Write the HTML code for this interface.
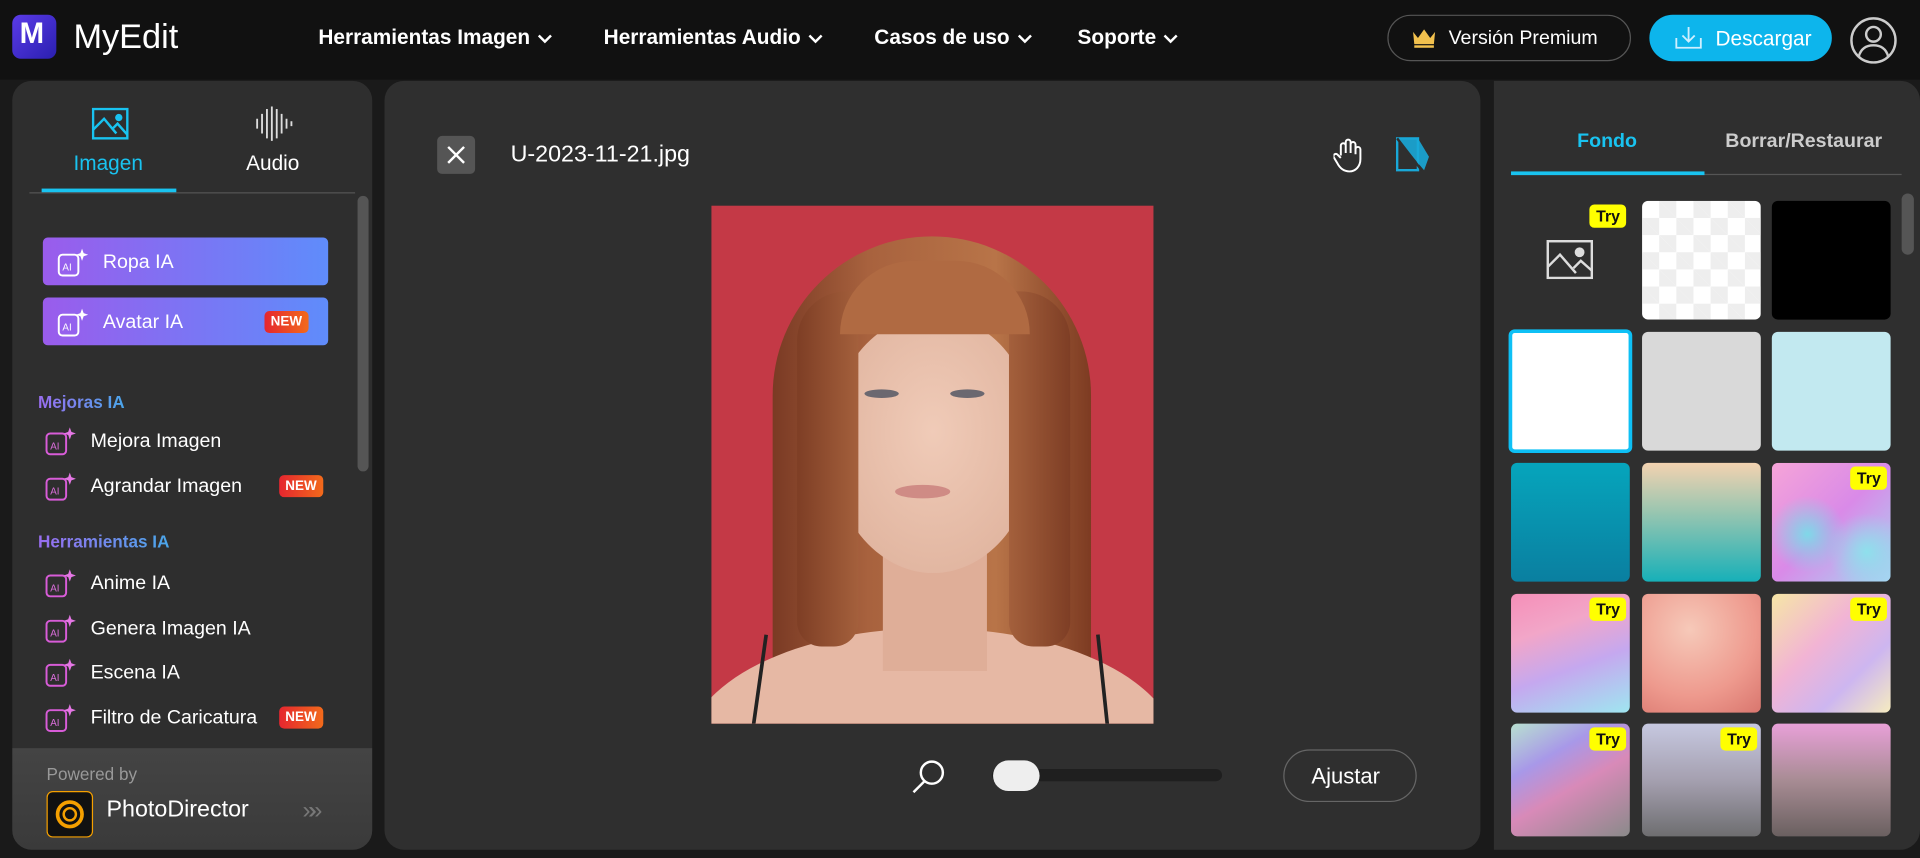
<!DOCTYPE html>
<html><head><meta charset="utf-8">
<style>
*{box-sizing:border-box;margin:0;padding:0}
html,body{width:1920px;height:858px;overflow:hidden;background:#111;font-family:"Liberation Sans",sans-serif;color:#fff}
#s{position:absolute;left:0;top:0;width:1568px;height:701px;transform:scale(1.22449);transform-origin:0 0;background:#1a1a1a}
.a{position:absolute}
.hdr{left:0;top:0;width:1568px;height:65px;background:#111}
.nav{top:21px;font-size:17px;font-weight:bold;white-space:nowrap}
.nav svg{margin-left:6px;vertical-align:middle}
.panel{background:#2e2e2e}
.mi{left:36px;font-size:16px;display:flex;align-items:center;gap:12px;height:24px}
.ai{width:26px;height:26px}
.new{background:linear-gradient(90deg,#e5262f,#f26a1b);color:#fff;font-size:11px;font-weight:bold;border-radius:4px;padding:3px 5px}
.sec{left:31px;font-size:14px;font-weight:bold;background:linear-gradient(90deg,#9a6df0,#4aa6ea);-webkit-background-clip:text;color:transparent}
.c{width:97px;height:97px;border-radius:5px;overflow:hidden}
.try{position:absolute;right:3px;top:3px;background:#ff0;color:#111;font-size:13px;font-weight:bold;padding:2px 5px;border-radius:4px}
</style></head><body>
<div id="s">
<div class="a hdr"></div>
<div class="a" style="left:10px;top:12px;width:36px;height:36px;border-radius:7px;background:linear-gradient(135deg,#5b3be8,#2a1fb0)"></div>
<div class="a" style="left:16px;top:14px;font-size:24px;font-weight:bold;color:#fff">M</div>
<div class="a" style="left:60px;top:14px;font-size:28px;color:#fff">MyEdit</div>
<div class="a nav" style="left:260px">Herramientas Imagen<svg width="12" height="8"><path d="M1 1l5 5 5-5" stroke="#fff" stroke-width="2" fill="none"/></svg></div>
<div class="a nav" style="left:493px">Herramientas Audio<svg width="12" height="8"><path d="M1 1l5 5 5-5" stroke="#fff" stroke-width="2" fill="none"/></svg></div>
<div class="a nav" style="left:714px">Casos de uso<svg width="12" height="8"><path d="M1 1l5 5 5-5" stroke="#fff" stroke-width="2" fill="none"/></svg></div>
<div class="a nav" style="left:880px">Soporte<svg width="12" height="8"><path d="M1 1l5 5 5-5" stroke="#fff" stroke-width="2" fill="none"/></svg></div>
<div class="a" style="left:1133px;top:12px;width:199px;height:38px;border:1px solid #555;border-radius:20px"></div>
<svg class="a" style="left:1153px;top:23px" width="20" height="17"><path d="M1 3l4 5 5-7 5 7 4-5-1 10H2z" fill="#f2c14e"/><rect x="2" y="14" width="16" height="2" fill="#f2c14e"/></svg>
<div class="a" style="left:1183px;top:23px;font-size:16px">Versión Premium</div>
<div class="a" style="left:1347px;top:12px;width:149px;height:38px;border-radius:20px;background:#0db5ec"></div>
<svg class="a" style="left:1367px;top:21px" width="24" height="20"><path d="M12 1v12M7 8l5 5 5-5M2 10v8h20v-8" stroke="#cfefff" stroke-width="1.5" fill="none"/></svg>
<div class="a" style="left:1401px;top:22px;font-size:17px">Descargar</div>
<svg class="a" style="left:1510px;top:13px" width="40" height="40"><circle cx="20" cy="20" r="18" stroke="#ccc" stroke-width="2" fill="none"/><circle cx="20" cy="15" r="6" stroke="#ccc" stroke-width="2" fill="none"/><path d="M8 33c2-7 7-9 12-9s10 2 12 9" stroke="#ccc" stroke-width="2" fill="none"/></svg>

<!-- left panel -->
<div class="a panel" style="left:10px;top:66px;width:294px;height:628px;border-radius:16px;overflow:hidden">
 <div class="a" style="left:0;top:545px;width:294px;height:83px;background:linear-gradient(#444,#3a3a3a)"></div>
</div>
<svg class="a" style="left:75px;top:88px" width="30" height="26"><rect x="1" y="1" width="28" height="24" stroke="#19c3f0" stroke-width="2" fill="none"/><path d="M1 18l9-9 10 12M17 17l4-4 8 9" stroke="#19c3f0" stroke-width="2" fill="none"/><circle cx="22" cy="8" r="3" fill="#19c3f0"/></svg>
<svg class="a" style="left:208px;top:86px" width="32" height="30"><g stroke="#ddd" stroke-width="1.5"><path d="M2 11v8M6 7v16M10 3v24M14 1v28M18 3v24M22 7v16M26 11v8M30 13v4"/></g></svg>
<div class="a" style="left:60px;top:124px;font-size:17px;color:#19c3f0">Imagen</div>
<div class="a" style="left:201px;top:124px;font-size:17px">Audio</div>
<div class="a" style="left:24px;top:157px;width:266px;height:1px;background:#555"></div>
<div class="a" style="left:34px;top:154px;width:110px;height:3px;background:#19c3f0"></div>
<div class="a" style="left:292px;top:160px;width:9px;height:225px;border-radius:5px;background:#555"></div>
<div class="a" style="left:35px;top:194px;width:233px;height:39px;border-radius:4px;background:linear-gradient(90deg,#9a5cec,#5f8cfb)"></div>
<div class="a" style="left:35px;top:243px;width:233px;height:39px;border-radius:4px;background:linear-gradient(90deg,#9a5cec,#5f8cfb)"></div>
<div class="a mi" style="left:46px;top:203px"><svg class="ai" viewBox="0 0 26 26"><rect x="2" y="6" width="16" height="17" rx="3" stroke="#fff" stroke-width="1.6" fill="none"/><text x="5" y="19" font-size="8" fill="#fff" font-family="Liberation Sans">AI</text><path d="M21 1l1.3 3.7 3.7 1.3-3.7 1.3L21 11l-1.3-3.7L16 6l3.7-1.3z" fill="#fff"/></svg>Ropa IA</div>
<div class="a mi" style="left:46px;top:252px"><svg class="ai" viewBox="0 0 26 26"><rect x="2" y="6" width="16" height="17" rx="3" stroke="#fff" stroke-width="1.6" fill="none"/><text x="5" y="19" font-size="8" fill="#fff" font-family="Liberation Sans">AI</text><path d="M21 1l1.3 3.7 3.7 1.3-3.7 1.3L21 11l-1.3-3.7L16 6l3.7-1.3z" fill="#fff"/></svg>Avatar IA</div>
<div class="a new" style="left:216px;top:254px">NEW</div>
<div class="a sec" style="top:320px">Mejoras IA</div>
<div class="a sec" style="top:434px">Herramientas IA</div>
<div class="a mi" style="top:349px"><svg class="ai" viewBox="0 0 26 26"><rect x="2" y="6" width="16" height="17" rx="3" stroke="#d85cd8" stroke-width="1.6" fill="none"/><text x="5" y="19" font-size="8" fill="#e070e0" font-family="Liberation Sans">AI</text><path d="M21 1l1.3 3.7 3.7 1.3-3.7 1.3L21 11l-1.3-3.7L16 6l3.7-1.3z" fill="#e577e5"/></svg>Mejora Imagen</div>
<div class="a mi" style="top:386px"><svg class="ai" viewBox="0 0 26 26"><rect x="2" y="6" width="16" height="17" rx="3" stroke="#d85cd8" stroke-width="1.6" fill="none"/><text x="5" y="19" font-size="8" fill="#e070e0" font-family="Liberation Sans">AI</text><path d="M21 1l1.3 3.7 3.7 1.3-3.7 1.3L21 11l-1.3-3.7L16 6l3.7-1.3z" fill="#e577e5"/></svg>Agrandar Imagen</div>
<div class="a new" style="left:228px;top:388px">NEW</div>
<div class="a mi" style="top:465px"><svg class="ai" viewBox="0 0 26 26"><rect x="2" y="6" width="16" height="17" rx="3" stroke="#d85cd8" stroke-width="1.6" fill="none"/><text x="5" y="19" font-size="8" fill="#e070e0" font-family="Liberation Sans">AI</text><path d="M21 1l1.3 3.7 3.7 1.3-3.7 1.3L21 11l-1.3-3.7L16 6l3.7-1.3z" fill="#e577e5"/></svg>Anime IA</div>
<div class="a mi" style="top:502px"><svg class="ai" viewBox="0 0 26 26"><rect x="2" y="6" width="16" height="17" rx="3" stroke="#d85cd8" stroke-width="1.6" fill="none"/><text x="5" y="19" font-size="8" fill="#e070e0" font-family="Liberation Sans">AI</text><path d="M21 1l1.3 3.7 3.7 1.3-3.7 1.3L21 11l-1.3-3.7L16 6l3.7-1.3z" fill="#e577e5"/></svg>Genera Imagen IA</div>
<div class="a mi" style="top:538px"><svg class="ai" viewBox="0 0 26 26"><rect x="2" y="6" width="16" height="17" rx="3" stroke="#d85cd8" stroke-width="1.6" fill="none"/><text x="5" y="19" font-size="8" fill="#e070e0" font-family="Liberation Sans">AI</text><path d="M21 1l1.3 3.7 3.7 1.3-3.7 1.3L21 11l-1.3-3.7L16 6l3.7-1.3z" fill="#e577e5"/></svg>Escena IA</div>
<div class="a mi" style="top:575px"><svg class="ai" viewBox="0 0 26 26"><rect x="2" y="6" width="16" height="17" rx="3" stroke="#d85cd8" stroke-width="1.6" fill="none"/><text x="5" y="19" font-size="8" fill="#e070e0" font-family="Liberation Sans">AI</text><path d="M21 1l1.3 3.7 3.7 1.3-3.7 1.3L21 11l-1.3-3.7L16 6l3.7-1.3z" fill="#e577e5"/></svg>Filtro de Caricatura</div>
<div class="a new" style="left:228px;top:577px">NEW</div>
<div class="a" style="left:38px;top:624px;font-size:14px;color:#999">Powered by</div>
<div class="a" style="left:38px;top:646px;width:38px;height:38px;border-radius:5px;background:#111;border:1.5px solid #f5a000"></div>
<svg class="a" style="left:44px;top:652px" width="26" height="26"><circle cx="13" cy="13" r="10" stroke="#f5a000" stroke-width="3" fill="none"/><circle cx="13" cy="13" r="5" stroke="#f5a000" stroke-width="2" fill="none"/></svg>
<div class="a" style="left:87px;top:651px;font-size:19px">PhotoDirector</div>
<div class="a" style="left:247px;top:651px;font-size:20px;color:#777;letter-spacing:-6px">»»</div>

<!-- center -->
<div class="a panel" style="left:314px;top:66px;width:895px;height:628px;border-radius:16px;background:#2f2f2f"></div>
<div class="a" style="left:357px;top:111px;width:31px;height:31px;border-radius:4px;background:#555"></div>
<svg class="a" style="left:364px;top:118px" width="17" height="17"><path d="M2 2l13 13M15 2L2 15" stroke="#fff" stroke-width="2"/></svg>
<div class="a" style="left:417px;top:116px;font-size:19px">U-2023-11-21.jpg</div>
<svg class="a" style="left:1089px;top:113px" width="24" height="28"><path d="M6 14V6a2 2 0 014 0v6V3a2 2 0 014 0v9V5a2 2 0 014 0v8V9a2 2 0 014 0v8c0 6-4 10-9 10s-8-3-10-7l-3-5a2 2 0 013-2l3 3" stroke="#fff" stroke-width="1.6" fill="none"/></svg>
<svg class="a" style="left:1140px;top:112px" width="30" height="30"><path d="M1 1h17v26H1z" stroke="#19a8d8" stroke-width="2" fill="none"/><path d="M1 1h17l0 0 9 15-4 11" fill="#19a8d8" opacity=".9"/><path d="M1 1l20 26" stroke="#2f2f2f" stroke-width="2"/></svg>
<div class="a" style="left:581px;top:168px;width:361px;height:423px;background:#c43946;overflow:hidden">
 <div class="a" style="left:50px;top:25px;width:260px;height:400px;border-radius:130px 130px 30px 30px;background:linear-gradient(90deg,#7a3a24,#a8623e 30%,#b87448 70%,#7d3b22)"></div>
 <div class="a" style="left:-20px;top:345px;width:400px;height:200px;border-radius:50%;background:#e6b8a4"></div>
 <div class="a" style="left:140px;top:250px;width:85px;height:130px;background:#dfae98"></div>
 <div class="a" style="left:97px;top:90px;width:168px;height:210px;border-radius:48% 48% 50% 50%;background:radial-gradient(ellipse at 50% 45%,#f0cbb8,#dcae98)"></div>
 <div class="a" style="left:125px;top:150px;width:28px;height:7px;border-radius:50%;background:#6b6870"></div>
 <div class="a" style="left:195px;top:150px;width:28px;height:7px;border-radius:50%;background:#6b6870"></div>
 <div class="a" style="left:150px;top:228px;width:45px;height:11px;border-radius:50%;background:#cf8b85"></div>
 <div class="a" style="left:70px;top:70px;width:50px;height:290px;border-radius:40px 0 20px 20px;background:linear-gradient(90deg,#7e3e25,#a4603c)"></div>
 <div class="a" style="left:243px;top:70px;width:50px;height:290px;border-radius:0 40px 20px 20px;background:linear-gradient(90deg,#a4603c,#7e3e25)"></div>
 <div class="a" style="left:105px;top:45px;width:155px;height:60px;border-radius:80px 80px 0 0;background:#b06a42"></div>
 <div class="a" style="left:38px;top:350px;width:3px;height:75px;background:#222;transform:rotate(8deg)"></div>
 <div class="a" style="left:318px;top:350px;width:3px;height:75px;background:#222;transform:rotate(-6deg)"></div>
</div>
<svg class="a" style="left:744px;top:619px" width="30" height="30"><circle cx="17" cy="12" r="9" stroke="#fff" stroke-width="2" fill="none"/><path d="M11 19L2 28" stroke="#fff" stroke-width="2"/></svg>
<div class="a" style="left:810px;top:628px;width:188px;height:10px;border-radius:5px;background:#1f1f1f"></div>
<div class="a" style="left:811px;top:621px;width:38px;height:25px;border-radius:13px;background:#eee"></div>
<div class="a" style="left:1048px;top:612px;width:109px;height:43px;border:1px solid #666;border-radius:22px"></div>
<div class="a" style="left:1071px;top:624px;font-size:18px">Ajustar</div>

<!-- right -->
<div class="a" style="left:1220px;top:66px;width:348px;height:628px;border-radius:0 16px 16px 0;background:#2f2f2f"></div>
<div class="a" style="left:1288px;top:107px;font-size:16px;font-weight:bold;color:#19c3f0">Fondo</div>
<div class="a" style="left:1409px;top:107px;font-size:16px;font-weight:bold;color:#ccc">Borrar/Restaurar</div>
<div class="a" style="left:1234px;top:142px;width:319px;height:1px;background:#555"></div>
<div class="a" style="left:1234px;top:140px;width:158px;height:3px;background:#19c3f0"></div>
<div class="a" style="left:1553px;top:158px;width:10px;height:50px;border-radius:5px;background:#555"></div>

<div class="a c" style="left:1234px;top:164px;overflow:visible">
 <svg class="a" style="left:29px;top:32px" width="38" height="32"><rect x="1" y="1" width="36" height="30" stroke="#ddd" stroke-width="2" fill="none"/><path d="M1 22l10-10 13 15M22 23l6-6 9 8" stroke="#ddd" stroke-width="2" fill="none"/><circle cx="27" cy="10" r="4" fill="#ddd"/></svg>
 <div class="try">Try</div></div>
<div class="a c" style="left:1341px;top:164px;background-color:#fff;background-image:linear-gradient(45deg,#eee 25%,transparent 25%,transparent 75%,#eee 75%),linear-gradient(45deg,#eee 25%,transparent 25%,transparent 75%,#eee 75%);background-size:28px 28px;background-position:0 0,14px 14px"></div>
<div class="a c" style="left:1447px;top:164px;background:#000"></div>
<div class="a c" style="left:1232px;top:269px;width:101px;height:101px;background:#fff;border:3px solid #0ec0f5"></div>
<div class="a c" style="left:1341px;top:271px;background:#d9d9d9"></div>
<div class="a c" style="left:1447px;top:271px;background:#c2e9f0"></div>
<div class="a c" style="left:1234px;top:378px;background:linear-gradient(#06a5bc,#0a7fa0)"></div>
<div class="a c" style="left:1341px;top:378px;background:linear-gradient(#f3d2b0,#9cc6b0 40%,#17b0b8)"></div>
<div class="a c" style="left:1447px;top:378px;background:radial-gradient(circle at 30% 60%,#7fd8e8,transparent 35%),radial-gradient(circle at 80% 75%,#8ee0ec,transparent 30%),linear-gradient(135deg,#f6a4d8,#d98ae8 50%,#a6d6f2)"><div class="try">Try</div></div>
<div class="a c" style="left:1234px;top:485px;background:linear-gradient(160deg,#f58fb8,#f2a6c8 30%,#c5a8ef 60%,#9fe6f0)"><div class="try">Try</div></div>
<div class="a c" style="left:1341px;top:485px;background:radial-gradient(circle at 40% 30%,#f6c9b9,#ee9a8e 60%,#d9766e)"></div>
<div class="a c" style="left:1447px;top:485px;background:linear-gradient(135deg,#f6e6a6,#f2b4d4 40%,#cdb6f0 70%,#f6ecc0)"><div class="try">Try</div></div>
<div class="a c" style="left:1234px;top:591px;height:92px;background:linear-gradient(150deg,#b8e0d0,#a898e8 30%,#d88ab8 55%,#8a8a8a)"><div class="try">Try</div></div>
<div class="a c" style="left:1341px;top:591px;height:92px;background:linear-gradient(#c6c8e0,#a5a0b0 50%,#6e6e70)"><div class="try">Try</div></div>
<div class="a c" style="left:1447px;top:591px;height:92px;background:linear-gradient(#e8a0d8,#a88c94 50%,#6a6060)"></div>
</div>
</body></html>
